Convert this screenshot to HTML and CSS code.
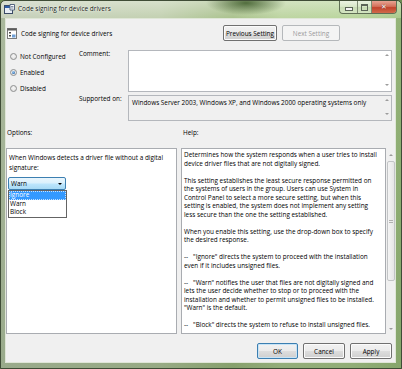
FILE: index.html
```html
<!DOCTYPE html>
<html lang="en">
<head>
    <meta charset="UTF-8">
    <meta name="viewport" content="width=device-width, initial-scale=1.0">
    <title>Code signing for device drivers</title>
    <link rel="stylesheet" href="styles.css">
</head>
<body>
    <div class="window">
        <div class="titlebar">
            <svg class="title-icon" width="11" height="10" viewBox="0 0 11 10">
                <rect x="0.5" y="1.5" width="8" height="8" fill="#e8eef6" stroke="#3a4a66"/>
                <rect x="1" y="2" width="7" height="2" fill="#2d5fa8"/>
                <path d="M6 0.5 L10.5 0.5 L10.5 6 L6 6 Z" fill="#ffffff" stroke="#55667f"/>
                <path d="M7 2.5 H9.5 M7 4 H9.5" stroke="#7f8da3"/>
            </svg>
            <span class="title-text">Code signing for device drivers</span>
            <div class="caption-buttons">
                <span class="cap-btn cap-min"><span class="min-glyph"></span></span>
                <span class="cap-btn cap-max"><span class="max-glyph"></span></span>
                <span class="cap-btn cap-close">&#x2715;</span>
            </div>
        </div>

        <div class="client">
            <div class="header">
                <svg class="policy-icon" width="10" height="11" viewBox="0 0 10 11">
                    <rect x="0.5" y="0.5" width="9" height="10" fill="#ffffff" stroke="#7a7a7a"/>
                    <rect x="0.5" y="0.5" width="9" height="2" fill="#5a5a5a"/>
                    <rect x="2" y="4" width="2" height="1.5" fill="#4a4a4a"/>
                    <rect x="2" y="7" width="2" height="1.5" fill="#4a4a4a"/>
                    <rect x="5" y="6.5" width="3.5" height="3" fill="#6f9fd6"/>
                </svg>
                <span class="header-title">Code signing for device drivers</span>
                <div class="nav-buttons">
                    <button class="btn btn-prev">Previous Setting</button>
                    <button class="btn btn-next" disabled>Next Setting</button>
                </div>
            </div>

            <div class="settings">
                <div class="states">
                    <label class="radio"><span class="radio-dot"></span>Not Configured</label>
                    <label class="radio"><span class="radio-dot checked"></span>Enabled</label>
                    <label class="radio"><span class="radio-dot"></span>Disabled</label>
                </div>
                <div class="fields">
                    <div class="field-label">Comment:</div>
                    <div class="textbox comment-box">
                        <div class="textbox-body"></div>
                        <div class="mini-scroll"><span class="arrow-up"></span><span class="arrow-down"></span></div>
                    </div>
                    <div class="field-label">Supported on:</div>
                    <div class="textbox readonly-box">
                        <div class="textbox-body">Windows Server 2003, Windows XP, and Windows 2000 operating systems only</div>
                        <div class="mini-scroll"><span class="arrow-up"></span><span class="arrow-down"></span></div>
                    </div>
                </div>
            </div>

            <div class="panels">
                <div class="options-col">
                    <div class="panel-label">Options:</div>
                    <div class="panel options-panel">
                        <p>When Windows detects a driver file without a digital<br>signature:</p>
                        <div class="combo">
                            <div class="combo-field">
                                <span>Warn</span>
                                <span class="combo-arrow"></span>
                            </div>
                            <ul class="combo-list">
                                <li class="selected">Ignore</li>
                                <li>Warn</li>
                                <li>Block</li>
                            </ul>
                        </div>
                    </div>
                </div>
                <div class="help-col">
                    <div class="panel-label">Help:</div>
                    <div class="help-wrap">
                        <div class="panel help-panel">
                            <p>Determines how the system responds when a user tries to install<br>device driver files that are not digitally signed.</p>
                            <p>This setting establishes the least secure response permitted on<br>the systems of users in the group. Users can use System in<br>Control Panel to select a more secure setting, but when this<br>setting is enabled, the system does not implement any setting<br>less secure than the one the setting established.</p>
                            <p>When you enable this setting, use the drop-down box to specify<br>the desired response.</p>
                            <p>--&nbsp;&nbsp;&nbsp;"Ignore" directs the system to proceed with the installation<br>even if it includes unsigned files.</p>
                            <p>--&nbsp;&nbsp;&nbsp;"Warn" notifies the user that files are not digitally signed and<br>lets the user decide whether to stop or to proceed with the<br>installation and whether to permit unsigned files to be installed.<br>"Warn" is the default.</p>
                            <p>--&nbsp;&nbsp;&nbsp;"Block" directs the system to refuse to install unsigned files.</p>
                        </div>
                        <div class="scrollbar">
                            <span class="arrow-up"></span>
                            <div class="thumb"><span class="grip"></span></div>
                            <span class="arrow-down"></span>
                        </div>
                    </div>
                </div>
            </div>

            <div class="footer">
                <button class="btn btn-ok">OK</button>
                <button class="btn btn-cancel">Cancel</button>
                <button class="btn btn-apply">Apply</button>
            </div>
        </div>
    </div>
</body>
</html>
```

FILE: styles.css
```css
* {
    margin: 0;
    padding: 0;
    box-sizing: border-box;
}

body {
    width: 402px;
    height: 369px;
    overflow: hidden;
    font-family: 'Open Sans', 'Segoe UI', sans-serif;
    font-size: 6.4px;
    color: #000;
    background: #6d8a52;
}

.window {
    width: 402px;
    height: 369px;
    display: flex;
    flex-direction: column;
    padding: 0 5px 5px 4px;
    border: 1px solid #3f4c36;
    border-radius: 5px 5px 0 0;
    background:
        radial-gradient(ellipse 40px 12px at 245px 2px, rgba(60, 90, 40, 0.85), rgba(60, 90, 40, 0) 100%),
        linear-gradient(180deg, rgba(255, 255, 255, 0.35) 0, rgba(255, 255, 255, 0) 18px),
        linear-gradient(180deg, rgba(70, 100, 50, 0) 17px, rgba(70, 100, 50, 0.22) 17px, rgba(70, 100, 50, 0.35) 100%),
        linear-gradient(90deg, #c6d0bb 0%, #c2d0b0 40%, #a9c18c 58%, #bcd4a0 70%, #b9d59c 88%, #a8c88a 100%);
}

/* title bar */
.titlebar {
    height: 17px;
    margin: 0 -5px 0 -4px;
    padding: 0 4px 2px 3px;
    display: flex;
    align-items: center;
}

.title-icon {
    flex-shrink: 0;
}

.title-text {
    margin-left: 3px;
    font-size: 6.5px;
    color: #101810;
    text-shadow: 0 0 3px rgba(255, 255, 255, 0.9), 0 0 1px rgba(255, 255, 255, 0.9);
}

.caption-buttons {
    margin-left: auto;
    align-self: flex-start;
    display: flex;
    height: 13px;
    border: 1px solid #5f6f55;
    border-top: none;
    border-radius: 0 0 4px 4px;
    overflow: hidden;
}

.cap-btn {
    display: flex;
    align-items: center;
    justify-content: center;
    background: linear-gradient(180deg, rgba(255, 255, 255, 0.55) 0%, rgba(255, 255, 255, 0.25) 50%, rgba(200, 215, 190, 0.3) 51%, rgba(230, 240, 220, 0.5) 100%);
}

.cap-min {
    width: 18px;
    border-right: 1px solid #7d8a72;
}

.cap-max {
    width: 14px;
    border-right: 1px solid #7d8a72;
}

.min-glyph {
    width: 6px;
    height: 2px;
    margin-top: 4px;
    background: #f4f4f4;
    border: 1px solid #5b6458;
    box-sizing: content-box;
}

.max-glyph {
    width: 5px;
    height: 4px;
    border: 1px solid #5b6458;
    border-top-width: 2px;
    box-sizing: content-box;
}

.cap-close {
    width: 24px;
    color: #fff;
    font-size: 7px;
    font-weight: bold;
    font-family: 'DejaVu Sans', sans-serif;
    text-shadow: 0 0 1px #5a1010;
    background: linear-gradient(180deg, #e8a493 0%, #d4705a 45%, #c2432c 55%, #d06a4a 100%);
}

/* client area */
.client {
    flex: 1;
    display: flex;
    flex-direction: column;
    background: #f0f0f0;
    border: 1px solid #dfe6d7;
}

.header {
    display: flex;
    align-items: center;
    height: 16px;
    margin-top: 6px;
}

.policy-icon {
    margin-left: 1px;
    flex-shrink: 0;
}

.header-title {
    margin-left: 4px;
}

.nav-buttons {
    margin-left: auto;
    margin-right: 55px;
    display: flex;
    gap: 5px;
}

.btn {
    height: 16px;
    font-family: inherit;
    font-size: 6.4px;
    color: #000;
    border: 1px solid #707070;
    border-radius: 2px;
    background: linear-gradient(180deg, #f2f2f2 0%, #ebebeb 48%, #dddddd 52%, #cfcfcf 100%);
    box-shadow: inset 0 0 0 1px #fbfbfb;
}

.btn-prev {
    width: 54px;
}

.btn-next {
    width: 58px;
    color: #9a9a9a;
    border-color: #b5b8bb;
    background: #f4f4f4;
    box-shadow: none;
}

.settings {
    display: flex;
    margin-top: 9px;
}

.states {
    width: 73px;
    padding-left: 4px;
    margin-top: -2px;
}

.radio {
    display: flex;
    align-items: center;
    height: 16px;
    gap: 3px;
}

.radio-dot {
    width: 7px;
    height: 7px;
    border-radius: 50%;
    border: 1px solid #8e8f8f;
    background: radial-gradient(circle at 50% 40%, #f6f6f6 0%, #dcdcdc 100%);
    display: flex;
    align-items: center;
    justify-content: center;
}

.radio-dot.checked::after {
    content: "";
    width: 3px;
    height: 3px;
    border-radius: 50%;
    background: radial-gradient(circle at 40% 35%, #a9d2f5 0%, #2f6fb3 70%, #1d4f8a 100%);
}

.fields {
    flex: 1;
    display: grid;
    grid-template-columns: 49px 1fr;
    row-gap: 3px;
    padding-right: 3px;
}

.field-label {
    line-height: 8px;
}

.textbox {
    display: flex;
    border: 1px solid #b4b7bc;
    background: #fff;
}

.comment-box {
    height: 42px;
}

.readonly-box {
    height: 26px;
    background: #f0f0f0;
}

.textbox-body {
    flex: 1;
    padding: 2px 3px;
    line-height: 9px;
}

.mini-scroll {
    width: 8px;
    display: flex;
    flex-direction: column;
    align-items: center;
    justify-content: space-between;
    padding: 3px 0 5px;
}

.arrow-up {
    width: 0;
    height: 0;
    border-left: 2px solid transparent;
    border-right: 2px solid transparent;
    border-bottom: 2px solid #9c9c9c;
}

.arrow-down {
    width: 0;
    height: 0;
    border-left: 2px solid transparent;
    border-right: 2px solid transparent;
    border-top: 2px solid #9c9c9c;
}

/* options + help */
.panels {
    display: flex;
    gap: 4px;
    margin-top: 7px;
}

.panel-label {
    line-height: 10px;
    margin-bottom: 10px;
}

.options-col {
    width: 171px;
}

.options-col .panel-label {
    padding-left: 1px;
}

.help-col {
    width: 214px;
}

.help-col .panel-label {
    padding-left: 2px;
}

.panel {
    height: 186px;
    border: 1px solid #a9acb1;
    background: #fff;
}

.options-panel {
    padding: 4px 2px;
    line-height: 10px;
}

.combo {
    position: relative;
    width: 58px;
    margin: 4px 0 0 -1px;
}

.combo-field {
    height: 13px;
    display: flex;
    align-items: center;
    justify-content: space-between;
    padding: 0 3px 0 2px;
    border: 1px solid #3c7fb1;
    border-radius: 2px;
    background: linear-gradient(180deg, #eaf6fd 0%, #d9f0fc 48%, #bee6fd 52%, #a7d9f5 100%);
}

.combo-arrow {
    width: 0;
    height: 0;
    border-left: 2px solid transparent;
    border-right: 2px solid transparent;
    border-top: 2px solid #000;
}

.combo-list {
    position: absolute;
    top: 13px;
    left: 0;
    width: 59px;
    list-style: none;
    background: #fff;
    border: 1px solid #646464;
}

.combo-list li {
    height: 8.5px;
    line-height: 8.5px;
    padding-left: 1px;
}

.combo-list li.selected {
    background: #3399ff;
    color: #fff;
    outline: 1px dotted #c5e2ff;
    outline-offset: -1px;
}

.help-wrap {
    display: flex;
}

.help-panel {
    width: 205px;
    padding: 2px 2px;
    line-height: 8.5px;
    white-space: nowrap;
    overflow: hidden;
}

.help-panel p {
    margin-bottom: 8.5px;
}

.scrollbar {
    width: 9px;
    height: 186px;
    display: flex;
    flex-direction: column;
    align-items: center;
    padding: 6px 0 4px;
}

.thumb {
    width: 8px;
    height: 120px;
    margin-top: 5px;
    border: 1px solid #c2c4c6;
    border-radius: 2px;
    background: linear-gradient(90deg, #f4f4f4, #e6e6e6);
    display: flex;
    align-items: center;
    justify-content: center;
}

.grip {
    width: 4px;
    height: 3px;
    border-top: 1px solid #b0b0b0;
    border-bottom: 1px solid #b0b0b0;
}

.scrollbar .arrow-down {
    margin-top: auto;
}

.footer {
    display: flex;
    justify-content: flex-end;
    gap: 5px;
    margin-top: 9px;
    padding-right: 3px;
}

.btn-ok {
    width: 41px;
    border-color: #3c7fb1;
    box-shadow: inset 0 0 0 1px #c7e4f7;
}

.btn-cancel,
.btn-apply {
    width: 42px;
}
```
